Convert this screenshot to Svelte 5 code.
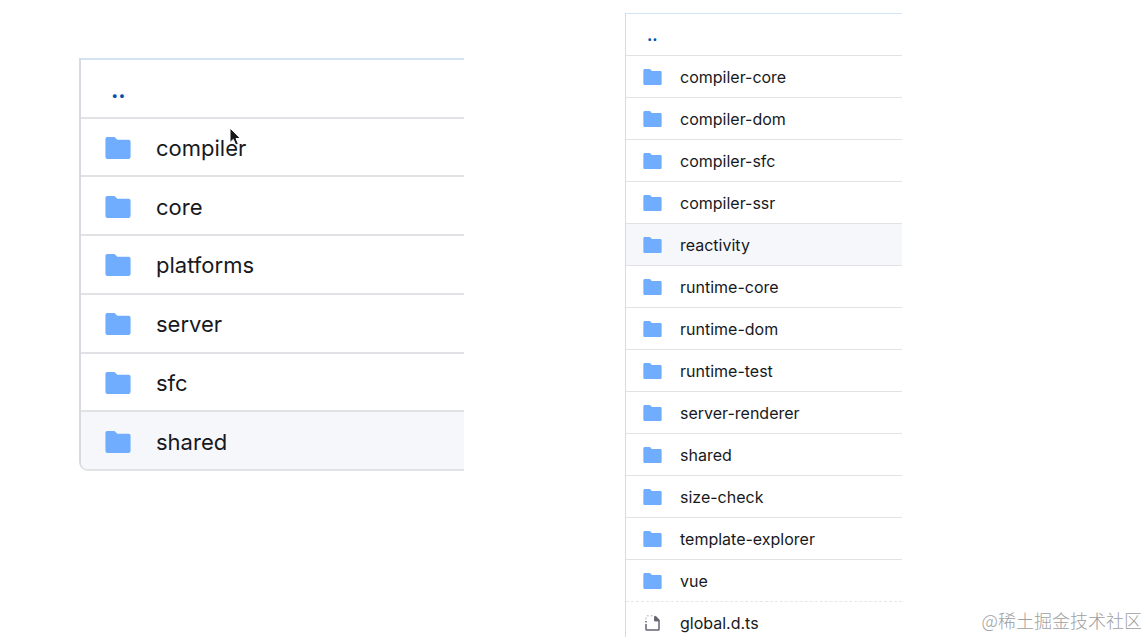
<script>
  const vue2Dirs = ['compiler', 'core', 'platforms', 'server', 'sfc', 'shared'];

  const vue3Packages = [
    'compiler-core',
    'compiler-dom',
    'compiler-sfc',
    'compiler-ssr',
    'reactivity',
    'runtime-core',
    'runtime-dom',
    'runtime-test',
    'server-renderer',
    'shared',
    'size-check',
    'template-explorer',
    'vue',
    'global.d.ts'
  ];

  const isFile = (name) => name.includes('.');
</script>

{#snippet icon(name)}
  {#if isFile(name)}
    <svg class="icon file" viewBox="0 0 19 16" aria-hidden="true">
      <path d="M3 6v1.5M3 9v5.3c0 .5.3.8.8.8h11.4c.5 0 .8-.3.8-.8V5.2l-3.6-3.6" />
      <path class="fold" d="M11.6 1.4v4.5h4.4L12.4 1.4z" />
      <path class="dashes" d="M3 4.5V1.6c0-.5.3-.8.8-.8H12" />
    </svg>
  {:else}
    <svg class="icon folder" viewBox="0 0 16 14" aria-hidden="true">
      <path d="M1.2 0h4.1c.5 0 .9.2 1.2.6l.7.9c.1.2.3.3.5.3h7.1c.7 0 1.2.5 1.2 1.2v9.6c0 .8-.5 1.4-1.2 1.4H1.2C.5 14 0 13.4 0 12.6V1.3C0 .6.5 0 1.2 0z" />
    </svg>
  {/if}
{/snippet}

{#snippet listing(names, active)}
  <li class="row parent"><a href="#up" aria-label="Parent directory">..</a></li>
  {#each names as name}
    <li class="row" class:active={name === active} class:faint={isFile(name)}>
      {@render icon(name)}
      <a href="#{name}">{name}</a>
    </li>
  {/each}
{/snippet}

<main>
  <ul class="files large">
    {@render listing(vue2Dirs, 'shared')}
  </ul>
  <ul class="files small">
    {@render listing(vue3Packages, 'reactivity')}
  </ul>
  <svg class="cursor" viewBox="0 0 12 20" aria-hidden="true">
    <path d="M1 1v14.5l3.3-3.1 2.4 5.6 2.7-1.1L7 11.5h4.4z" />
  </svg>
  <span class="watermark">@稀土掘金技术社区</span>
</main>

<style>
  :global(body) {
    margin: 0;
    background: #fff;
  }
  main {
    position: relative;
    display: grid;
    grid-template-columns: 79fr 385fr 161fr 277fr 246fr;
    align-items: start;
    height: 100vh;
    overflow: hidden;
    font-family: Inter, 'Liberation Sans', sans-serif;
  }
  .files {
    display: grid;
    grid-auto-rows: 1fr;
    box-sizing: border-box;
    margin: 0;
    padding: 0;
    list-style: none;
    border-left: 1px solid #d8dadf;
    overflow: hidden;
  }
  .row {
    display: flex;
    align-items: center;
    box-sizing: border-box;
    border-top: 1px solid #e0e2e6;
  }
  .row a {
    color: #17191d;
    text-decoration: none;
  }
  .row.parent {
    border-top-color: #d3e3f6;
  }
  .row.parent a {
    color: #0550ae;
    font-weight: 700;
  }
  .row.active {
    background: #f5f7fb;
  }
  .row.faint {
    border-top: 1px dashed #e6e7ea;
  }
  .icon {
    flex: none;
  }
  .folder {
    fill: #70adff;
  }
  .file {
    fill: none;
    stroke: #656471;
    stroke-width: 1.5;
  }
  .file .fold {
    fill: #656471;
    stroke-width: 1;
  }
  .file .dashes {
    stroke: #b5b5bc;
    stroke-width: 1;
    stroke-dasharray: 2 2;
  }

  .large {
    grid-column: 2;
    min-height: 413px;
    margin-top: 58px;
    border-left-width: 2px;
    border-bottom: 2px solid #e0e2e6;
    border-bottom-left-radius: 9px;
    font-size: 22px;
    line-height: 28px;
  }
  .large .row {
    gap: 25px;
    padding: 2px 0 0 24px;
    border-top-width: 2px;
  }
  .large .parent {
    padding: 4px 0 0 30px;
  }
  .large .folder {
    width: 26px;
    height: 22px;
  }

  .small {
    grid-column: 4;
    margin-top: 13px;
    font-size: 16px;
    line-height: 20px;
  }
  .small .row {
    gap: 18px;
    height: 42px;
    padding-left: 17px;
  }
  .small .parent {
    padding-left: 21px;
  }
  .small .icon {
    width: 19px;
    height: 16px;
  }

  .cursor {
    position: absolute;
    left: 229px;
    top: 127px;
    width: 12px;
    height: 20px;
    fill: #17181a;
    stroke: #fff;
    stroke-width: 1;
  }
  .watermark {
    position: absolute;
    right: 6px;
    bottom: 3px;
    color: #a0a0a0;
    font-family: 'Noto Sans CJK SC', sans-serif;
    font-size: 18px;
    font-weight: 300;
    line-height: 28px;
  }
</style>
